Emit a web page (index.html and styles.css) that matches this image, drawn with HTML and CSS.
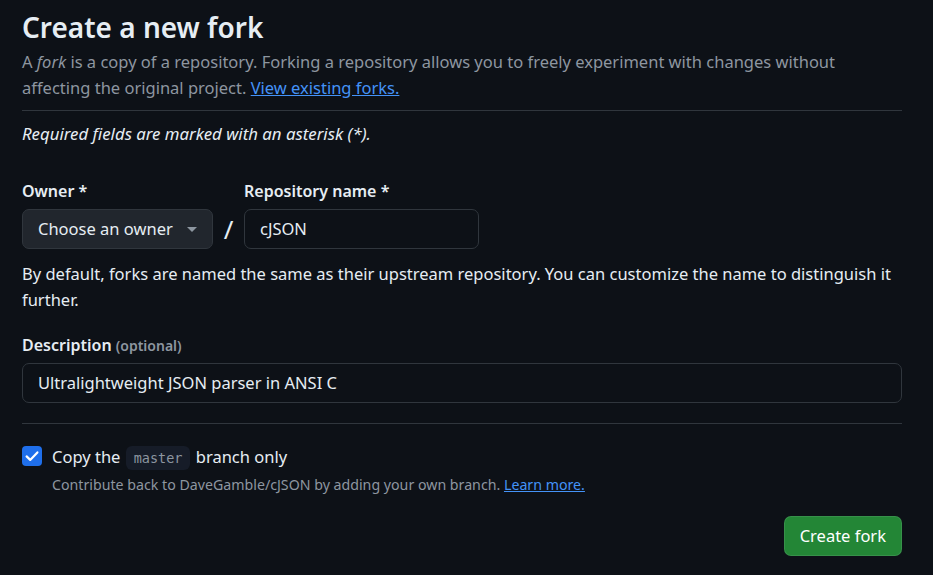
FILE: index.html
```html
<!DOCTYPE html>
<html lang="en">
<head>
<meta charset="utf-8">
<title>Create a new fork</title>
<link rel="stylesheet" href="styles.css">
</head>
<body>
<main class="page">
  <header class="head">
    <h1 class="title">Create a new fork</h1>
    <p class="lead">A <em>fork</em> is a copy of a repository. Forking a repository allows you to freely experiment with changes without affecting the original project. <a href="#" class="link">View existing forks.</a></p>
  </header>
  <p class="required">Required fields are marked with an asterisk (*).</p>

  <div class="name-row">
    <div class="field">
      <label class="label">Owner *</label>
      <button class="select">Choose an owner <span class="caret"></span></button>
    </div>
    <span class="slash">/</span>
    <div class="field">
      <label class="label">Repository name *</label>
      <div class="input repo">cJSON</div>
    </div>
  </div>
  <p class="help">By default, forks are named the same as their upstream repository. You can customize the name to distinguish it further.</p>

  <div class="field desc-field">
    <label class="label desc-label">Description <span class="optional">(optional)</span></label>
    <div class="input desc">Ultralightweight JSON parser in ANSI C</div>
  </div>

  <div class="check-row">
    <span class="checkbox"><svg viewBox="0 0 16 16" width="16" height="16"><path d="M2.6 8.4l3.6 3.5L13.4 4.4" fill="none" stroke="#fff" stroke-width="2.2" stroke-linecap="round" stroke-linejoin="round"/></svg></span>
    <div class="check-text">
      <div class="check-label">Copy the <code class="code">master</code> branch only</div>
      <div class="check-note">Contribute back to DaveGamble/cJSON by adding your own branch. <a href="#" class="link">Learn more.</a></div>
    </div>
  </div>

  <div class="actions">
    <button class="btn-primary">Create fork</button>
  </div>
</main>
</body>
</html>
```
FILE: styles.css
```css
* { box-sizing: border-box; }
html, body { margin: 0; padding: 0; }
body {
  background: #0d1117;
  color: #e6edf3;
  font-family: "Noto Sans", "Open Sans", sans-serif;
  font-size: 16.5px;
  line-height: 26px;
}
.page {
  width: 880px;
  margin-left: 22px;
  padding-top: 8px;
}
.title {
  margin: 0;
  font-size: 28px;
  font-weight: 600;
  line-height: 38px;
}
.lead {
  margin: 3px 0 0;
  color: #8d96a0;
  padding-bottom: 9px;
  border-bottom: 1px solid #30363d;
}
.link { color: #4493f8; text-decoration: underline; }
.required {
  margin: 10px 0 0;
  font-style: italic;
  font-size: 16.8px;
}
.name-row {
  display: flex;
  align-items: flex-end;
  margin-top: 31px;
}
.field { display: flex; flex-direction: column; }
.label {
  font-weight: 600;
  font-size: 16px;
  line-height: 26px;
  margin-bottom: 5px;
}
.select {
  width: 191px;
  height: 40px;
  background: #21262d;
  border: 1px solid #30363d;
  border-radius: 7px;
  color: #e6edf3;
  font: inherit;
  text-align: left;
  padding: 0 15px;
  display: flex;
  align-items: center;
  justify-content: space-between;
}
.caret {
  width: 0; height: 0;
  border-left: 5px solid transparent;
  border-right: 5px solid transparent;
  border-top: 5px solid #8d96a0;
  margin-left: 8px;
}
.slash {
  width: 31px;
  text-align: center;
  font-size: 26px;
  line-height: 40px;
  height: 40px;
}
.input {
  height: 40px;
  border: 1px solid #30363d;
  border-radius: 7px;
  background: #0d1117;
  padding: 0 15px;
  display: flex;
  align-items: center;
}
.repo { width: 235px; }
.help { margin: 12px 0 0; }
.desc-field {
  margin-top: 19px;
  padding-bottom: 20px;
  border-bottom: 1px solid #30363d;
}
.desc-label { margin-bottom: 4px; }
.optional { color: #8d96a0; font-size: 14px; }
.desc { width: 880px; }
.check-row {
  display: flex;
  gap: 10px;
  margin-top: 22px;
}
.checkbox {
  width: 20px; height: 20px;
  background: #1f6feb;
  border-radius: 4px;
  display: flex;
  align-items: center;
  justify-content: center;
  flex: none;
}
.check-label { line-height: 22px; }
.code {
  font-family: "DejaVu Sans Mono", "Liberation Mono", monospace;
  font-size: 13.5px;
  background: #161c28;
  color: #8d96a0;
  padding: 4px 8px;
  margin: 0 1px;
  border-radius: 6px;
}
.check-note {
  color: #8d96a0;
  font-size: 14.2px;
  margin-top: 5px;
  line-height: 22px;
}
.actions {
  display: flex;
  justify-content: flex-end;
  margin-top: 20px;
}
.btn-primary {
  background: #238636;
  color: #fff;
  border: 1px solid rgba(240,246,252,0.1);
  border-radius: 7px;
  font: inherit;
  height: 40px;
  padding: 0 15px;
  white-space: nowrap;
}
```
